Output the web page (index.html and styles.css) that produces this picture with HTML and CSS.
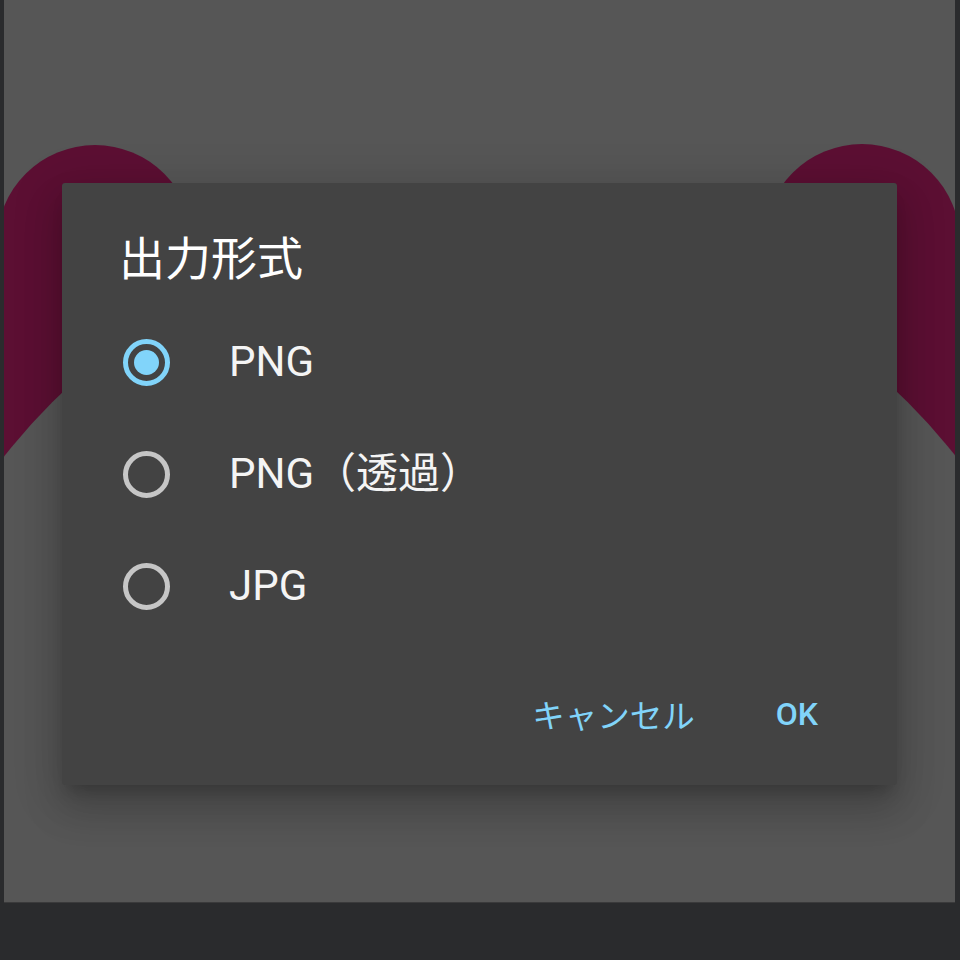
FILE: index.html
```html
<!DOCTYPE html>
<html lang="ja">
<head>
<meta charset="utf-8">
<title>出力形式</title>
<link rel="stylesheet" href="styles.css">
</head>
<body>
<div class="panel">
  <svg class="art" viewBox="0 0 951 903" width="951" height="903" aria-hidden="true">
    <circle cx="91" cy="243" r="98" fill="#5c0f33"/>
    <circle cx="858" cy="242" r="98" fill="#5c0f33"/>
    <rect x="-20" y="242" width="1000" height="700" fill="#5c0f33"/>
    <circle cx="476" cy="830" r="605" fill="#565656"/>
  </svg>
  <div class="dialog">
    <h1 class="title">出力形式</h1>
    <ul class="options">
      <li class="option"><span class="radio checked"></span><span class="label">PNG</span></li>
      <li class="option"><span class="radio"></span><span class="label">PNG（透過）</span></li>
      <li class="option"><span class="radio"></span><span class="label">JPG</span></li>
    </ul>
    <div class="actions">
      <button class="btn cancel">キャンセル</button>
      <button class="btn ok">OK</button>
    </div>
  </div>
</div>
</body>
</html>
```
FILE: styles.css
```css
html, body {
  margin: 0;
  padding: 0;
}
body {
  width: 960px;
  height: 960px;
  overflow: hidden;
  background: #2a2b2d;
  font-family: Roboto, "Noto Sans CJK JP", sans-serif;
}
.panel {
  position: relative;
  box-sizing: border-box;
  margin-left: 4px;
  width: 951px;
  height: 903px;
  padding: 183px 0 0 58px;
  background: #565656;
  overflow: hidden;
  border-bottom: 1px solid #3a3a3b;
}
.art {
  position: absolute;
  left: 0;
  top: 0;
}
.dialog {
  position: relative;
  width: 835px;
  height: 602px;
  background: #434343;
  border-radius: 3px;
  box-shadow: 0 24px 38px 3px rgba(0,0,0,.14), 0 9px 46px 8px rgba(0,0,0,.12), 0 11px 15px -7px rgba(0,0,0,.2);
}
.title {
  margin: 0;
  padding: 40px 0 0 57px;
  height: 64px;
  line-height: 64px;
  font-family: "Noto Sans CJK JP", sans-serif;
  font-size: 46px;
  font-weight: 400;
  color: #ffffff;
}
.options {
  list-style: none;
  margin: 19px 0 0;
  padding: 0;
}
.option {
  display: flex;
  align-items: center;
  height: 112px;
  padding-left: 61px;
}
.radio {
  box-sizing: border-box;
  display: flex;
  align-items: center;
  justify-content: center;
  width: 47px;
  height: 47px;
  border: 5px solid #c6c6c6;
  border-radius: 50%;
}
.radio.checked {
  border-color: #81d4fa;
}
.radio.checked::after {
  content: "";
  width: 25px;
  height: 25px;
  border-radius: 50%;
  background: #81d4fa;
}
.label {
  margin-left: 59px;
  font-family: Roboto, "Noto Sans CJK JP", sans-serif;
  font-size: 42px;
  line-height: 56px;
  color: #f4f4f4;
}
.actions {
  display: flex;
  align-items: center;
  justify-content: flex-end;
  height: 72px;
  margin-top: 36px;
  padding-right: 79px;
}
.btn {
  background: none;
  border: 0;
  padding: 0;
  margin: 0;
  color: #81d4fa;
  line-height: 48px;
}
.cancel {
  font-family: "Noto Sans CJK JP", sans-serif;
  font-size: 32.5px;
  margin-right: 81px;
}
.ok {
  font-family: Roboto, sans-serif;
  font-weight: 500;
  font-size: 32px;
}
```
